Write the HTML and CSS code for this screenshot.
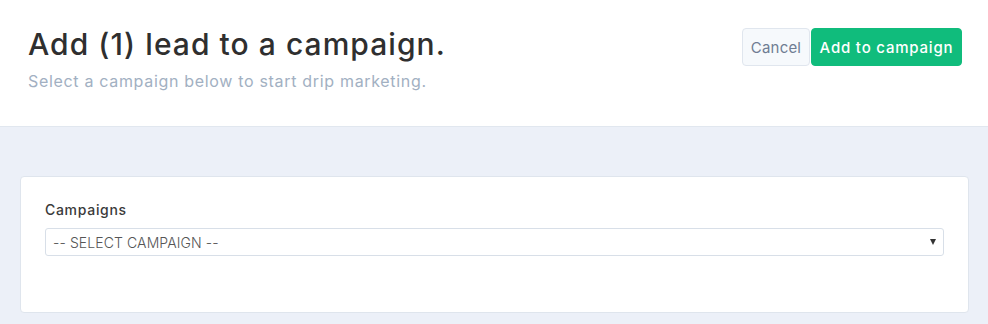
FILE: index.html
```html
<!DOCTYPE html>
<html>
<head>
<meta charset="utf-8">
<link rel="stylesheet" href="styles.css">
</head>
<body>
<header class="header">
  <div class="header-text">
    <h1 class="title">Add (1) lead to a campaign.</h1>
    <p class="subtitle">Select a campaign below to start drip marketing.</p>
  </div>
  <div class="actions">
    <button class="btn btn-cancel">Cancel</button>
    <button class="btn btn-primary">Add to campaign</button>
  </div>
</header>
<main class="main">
  <section class="card">
    <label class="label" for="campaign">Campaigns</label>
    <div class="select-wrap">
      <select id="campaign" class="select">
        <option>-- SELECT CAMPAIGN --</option>
      </select>
      <span class="arrow"></span>
    </div>
  </section>
</main>
</body>
</html>
```
FILE: styles.css
```css
* { box-sizing: border-box; }
html, body { margin: 0; padding: 0; }
body {
  font-family: Inter, "Open Sans", sans-serif;
  background: #ecf0f8;
  width: 988px;
  height: 324px;
  overflow: hidden;
}
.header {
  background: #fff;
  height: 127px;
  border-bottom: 1px solid #e1e7ef;
  display: flex;
  justify-content: space-between;
  align-items: flex-start;
  padding: 28px 26px 0 28px;
}
.title {
  margin: 0;
  font-size: 30px;
  font-weight: 500;
  color: #2f2f2f;
  line-height: 32px;
  letter-spacing: 1.05px;
}
.subtitle {
  margin: 11px 0 0;
  font-size: 16px;
  color: #a2b0c2;
  line-height: 20px;
  letter-spacing: 0.68px;
}
.actions {
  display: flex;
  gap: 1px;
}
.btn {
  height: 38px;
  font-family: inherit;
  font-size: 15px;
  border-radius: 4px;
  padding: 0;
  cursor: pointer;
}
.btn-cancel {
  width: 68px;
  background: #f6f9fc;
  border: 1px solid #e0e6ee;
  color: #6f7d93;
  letter-spacing: 0.2px;
}
.btn-primary {
  width: 151px;
  background: #10bc7c;
  border: 1px solid #10bc7c;
  color: #fff;
  font-weight: 500;
  letter-spacing: 0.8px;
}
.main {
  padding: 49px 19px 0 20px;
}
.card {
  background: #fff;
  border: 1px solid #dfe5ed;
  border-radius: 4px;
  height: 137px;
  padding: 24px 24px 0 24px;
}
.label {
  display: block;
  font-size: 14px;
  font-weight: 500;
  color: #3a3a3a;
  line-height: 18px;
  margin-bottom: 9px;
  letter-spacing: 0.7px;
}
.select-wrap {
  position: relative;
}
.select {
  appearance: none;
  -webkit-appearance: none;
  width: 100%;
  height: 28px;
  border: 1px solid #d8dfe8;
  border-radius: 3px;
  background: #fff;
  font-family: inherit;
  font-size: 14px;
  font-weight: 300;
  color: #555;
  padding: 0 7px;
  letter-spacing: 0.1px;
}
.arrow {
  position: absolute;
  right: 8px;
  top: 11px;
  width: 0;
  height: 0;
  border-left: 3.5px solid transparent;
  border-right: 3.5px solid transparent;
  border-top: 6px solid #333;
  pointer-events: none;
}
```
